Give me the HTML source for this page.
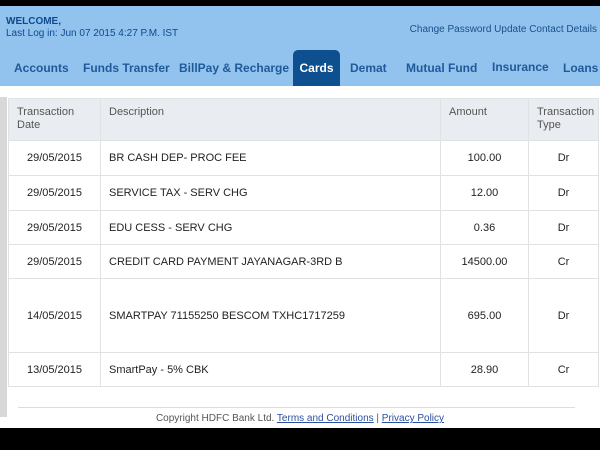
<!DOCTYPE html><html><head><style>
body{margin:0;width:600px;height:450px;overflow:hidden;background:#000;font-family:"Liberation Sans",sans-serif;position:relative}
.hdr{position:absolute;left:0;top:6px;width:600px;height:80px;background:#92c3ef}
.wel{position:absolute;left:6px;top:10px;font-size:10px;color:#0d4a8c;line-height:12px}
.cp{position:absolute;right:3px;top:18px;font-size:10px;color:#1a4f8a}
.tab{position:absolute;top:55px;font-size:12px;font-weight:bold;color:#1f5a98}
.cards{position:absolute;left:293px;top:50px;width:47px;height:36px;background:#0e4f8f;border-radius:5px 5px 0 0;color:#fff;font-size:12px;font-weight:bold;text-align:center;line-height:36px}
.main{position:absolute;left:0;top:86px;width:600px;height:342px;background:#fff}
.sb{position:absolute;left:0;top:11px;width:7px;height:320px;background:#d8d8d8}
table{position:absolute;left:8px;top:12px;width:590px;border-collapse:collapse;font-size:11px;color:#222;table-layout:fixed}
td,th{border:1px solid #e0e3e6;padding:0 8px}
th{background:#e9edf1;font-weight:normal;color:#555;text-align:left;vertical-align:top;padding-top:7px;height:34px;line-height:13px}
td.c{text-align:center}
.ft{position:absolute;left:18px;top:321px;width:557px;border-top:1px solid #ddd}
.ftt{position:absolute;left:0;width:600px;top:327px;text-align:center;font-size:10px;color:#555}
.ftt a{color:#2a4fa0;text-decoration:underline}
</style></head><body>
<div class="hdr">
<div class="wel"><b>WELCOME,</b><br>Last Log in: Jun 07 2015 4:27 P.M. IST</div>
<div class="cp">Change Password Update Contact Details</div>
<span class="tab" style="left:14px">Accounts</span>
<span class="tab" style="left:83px">Funds Transfer</span>
<span class="tab" style="left:179px">BillPay &amp; Recharge</span>
<span class="tab" style="left:350px">Demat</span>
<span class="tab" style="left:406px">Mutual Fund</span>
<span class="tab" style="left:492px;top:54px">Insurance</span>
<span class="tab" style="left:563px">Loans</span>
</div>
<div class="cards">Cards</div>
<div class="main">
<div class="sb"></div>
<table>
<colgroup><col style="width:92px"><col style="width:340px"><col style="width:88px"><col style="width:70px"></colgroup>
<tr><th>Transaction Date</th><th>Description</th><th>Amount</th><th>Transaction Type</th></tr>
<tr style="height:35px"><td class="c">29/05/2015</td><td>BR CASH DEP- PROC FEE</td><td class="c">100.00</td><td class="c">Dr</td></tr>
<tr style="height:35px"><td class="c">29/05/2015</td><td>SERVICE TAX - SERV CHG</td><td class="c">12.00</td><td class="c">Dr</td></tr>
<tr style="height:34px"><td class="c">29/05/2015</td><td>EDU CESS - SERV CHG</td><td class="c">0.36</td><td class="c">Dr</td></tr>
<tr style="height:34px"><td class="c">29/05/2015</td><td>CREDIT CARD PAYMENT JAYANAGAR-3RD B</td><td class="c">14500.00</td><td class="c">Cr</td></tr>
<tr style="height:74px"><td class="c">14/05/2015</td><td>SMARTPAY 71155250 BESCOM TXHC1717259</td><td class="c">695.00</td><td class="c">Dr</td></tr>
<tr style="height:34px"><td class="c">13/05/2015</td><td>SmartPay - 5% CBK</td><td class="c">28.90</td><td class="c">Cr</td></tr>
</table>
<div class="ft"></div>
<div class="ftt">Copyright HDFC Bank Ltd. <a>Terms and Conditions</a> | <a>Privacy Policy</a></div>
</div>
</body></html>
